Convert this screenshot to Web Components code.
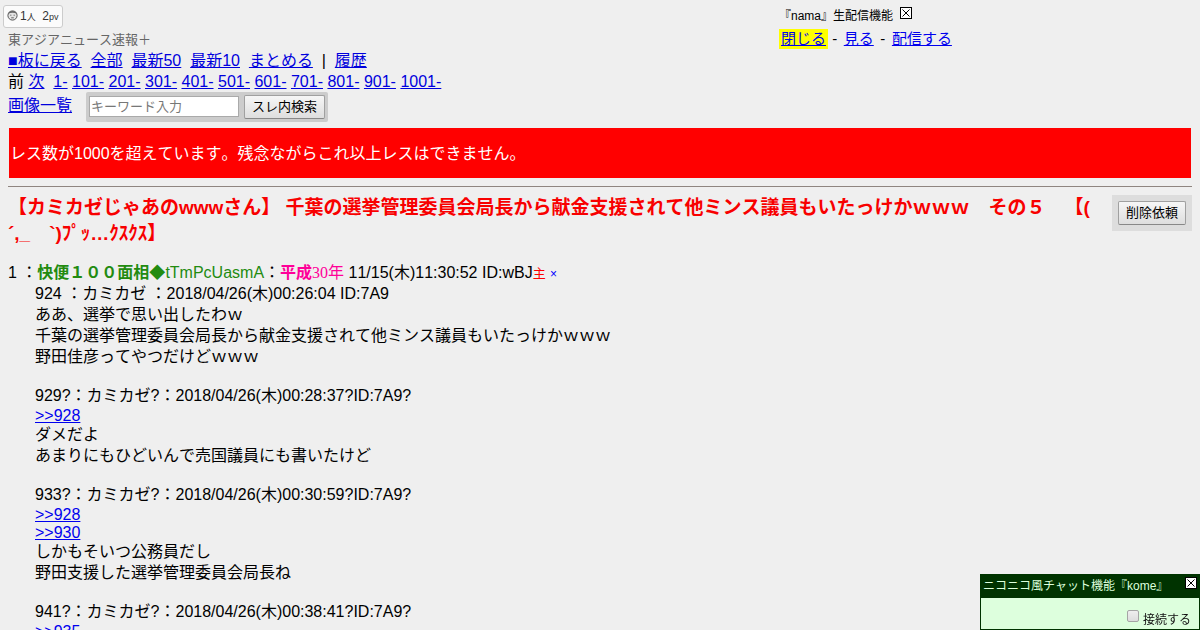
<!DOCTYPE html>
<html lang="ja">
<head>
<meta charset="utf-8">
<title>東アジアニュース速報＋</title>
<style>
    html, body{margin: 0; height: 630px; overflow: hidden}
    body{
        background: #efefef;
        color: #000;
        font: 16px/21px "Liberation Sans", "Noto Sans CJK JP", sans-serif;
        font-kerning: none;
        text-spacing-trim: space-all;
    }
</style>
</head>
<body>
<thread-page>
    <view-counter slot="top" people="1" views="2"></view-counter>
    <board-nav slot="top" board="東アジアニュース速報＋"></board-nav>
    <nama-panel slot="side"></nama-panel>
    <limit-alert>レス数が1000を超えています。残念ながらこれ以上レスはできません。</limit-alert>
    <thread-title>【カミカゼじゃあのwwwさん】 千葉の選挙管理委員会局長から献金支援されて他ミンス議員もいたっけかｗｗｗ　その５　【(<br>´,_　`)ﾌﾟｯ…ｸｽｸｽ】</thread-title>
    <thread-post></thread-post>
</thread-page>
<kome-chat></kome-chat>

<script>
function attach(el, html){
    const template= document.createElement('template');
    template.innerHTML= html;
    el.attachShadow({mode: 'open'});
    el.shadowRoot.appendChild(template.content.cloneNode(true));
}

const closeBox= `<svg class="close" viewBox="0 0 12 12" width="12" height="12" shape-rendering="crispEdges">
    <rect x=".5" y=".5" width="11" height="11" fill="#fff" stroke="#000"/>
    <path d="M2.5 2.5L9.5 9.5M9.5 2.5L2.5 9.5" stroke="#000" fill="none" shape-rendering="auto"/>
</svg>`;

const buttonStyle= `
    button{
        box-sizing: border-box;
        height: 24px;
        padding: 0;
        border: 1px solid #a0a0a0;
        border-bottom-color: #888;
        border-radius: 2px;
        background: linear-gradient(#f6f6f6, #dedede);
        color: #000;
        font: 13px/20px "Liberation Sans", "Noto Sans CJK JP", sans-serif;
        font-kerning: none;
        white-space: nowrap;
    }
`;

class ThreadPage extends HTMLElement{
    constructor(){
        super();
        attach(this, `
            <style>
                :host{display: block; padding: 0 8px}
                .head{display: grid; grid-template-columns: 771px 1fr; height: 128px}
            </style>
            <div class="head">
                <div><slot name="top"></slot></div>
                <slot name="side"></slot>
            </div>
            <slot></slot>
        `);
    }
}

class ViewCounter extends HTMLElement{
    constructor(){
        super();
        attach(this, `
            <style>
                :host{
                    display: flex;
                    align-items: center;
                    box-sizing: border-box;
                    width: 60px;
                    height: 23px;
                    margin: 5px 0 0 -5px;
                    padding-left: 3px;
                    border: 1px solid #ccc;
                    border-radius: 3px;
                    background: #fbfbfb;
                    color: #333;
                    font-size: 12px;
                    line-height: 21px;
                    white-space: pre;
                }
                svg{margin: -3px 2px 0 0}
                small{font-size: 9px}
            </style>
            <svg width="11" height="11" viewBox="0 0 11 11">
                <circle cx="5.5" cy="5.5" r="4.6" fill="#e4e4e4" stroke="#555"/>
                <path d="M1 4.2Q1.6 1 5.5 1T10 4.2Q8 2.8 5.5 2.8T1 4.2Z" fill="#666"/>
                <path d="M3.2 5.2h1.2M6.6 5.2h1.2M4.2 7.8h2.6" stroke="#666"/>
            </svg><span>${this.getAttribute('people')}<small>人</small>  ${this.getAttribute('views')}<small>pv</small></span>
        `);
    }
}

class BoardNav extends HTMLElement{
    constructor(){
        super();
        const pages= ['1-'];
        for(let i= 101; i <= 1001; i+= 100){
            pages.push(i + '-');
        }
        attach(this, `
            <style>
                :host{display: block; padding-top: 1px; white-space: nowrap}
                a{color: #00d}
                .board{color: #666; font-size: 13px; line-height: 21px}
                .search{display: flex; align-items: flex-start; height: 30px; line-height: 27px}
                form{
                    display: flex;
                    align-items: flex-start;
                    gap: 5px;
                    box-sizing: border-box;
                    width: 242px;
                    height: 30px;
                    margin: 0 0 0 14px;
                    padding: 3px 0 0 3px;
                    border-radius: 2px;
                    background: #ccc;
                }
                input{
                    box-sizing: border-box;
                    width: 150px;
                    height: 21px;
                    margin: 1px 0 0;
                    padding: 0 1px;
                    border: 1px solid #aaa;
                    background: #fff;
                    font: 13px "Liberation Sans", "Noto Sans CJK JP", sans-serif;
                    font-kerning: none;
                }
                input::placeholder{color: #777}
                ${buttonStyle}
                button{width: 81px}
            </style>
            <div class="board">${this.getAttribute('board')}</div>
            <div><a href="#">■板に戻る</a>&nbsp; <a href="#">全部</a>&nbsp; <a href="#">最新50</a>&nbsp; <a href="#">最新10</a>&nbsp; <a href="#">まとめる</a>&nbsp; |&nbsp; <a href="#">履歴</a></div>
            <div>前 <a href="#">次</a>&nbsp; ${pages.map(p => `<a href="#">${p}</a>`).join(' ')}</div>
            <div class="search">
                <a href="#">画像一覧</a>
                <form><input placeholder="キーワード入力"><button type="button">スレ内検索</button></form>
            </div>
        `);
    }
}

class NamaPanel extends HTMLElement{
    constructor(){
        super();
        attach(this, `
            <style>
                :host{display: block; padding-top: 5px; white-space: nowrap}
                .name{display: flex; gap: 7px; height: 21px; font-size: 12px; line-height: 22px}
                .close{margin-top: 2px}
                .links{margin-top: 3px; font-size: 15px; line-height: 20px}
                span a{color: #00e}
                .link{padding: 0 2.4px}
                .on{display: inline-block; padding: 0 2px; background: #ff0}
            </style>
            <div class="name"><span>『nama』生配信機能</span>${closeBox}</div>
            <div class="links"><span class="on"><a href="#">閉じる</a></span> - <span class="link"><a href="#">見る</a></span> - <span class="link"><a href="#">配信する</a></span></div>
        `);
    }
}

class LimitAlert extends HTMLElement{
    constructor(){
        super();
        attach(this, `
            <style>
                :host{
                    display: block;
                    height: 50px;
                    margin: 0 1px;
                    padding-left: 1px;
                    background: #f00;
                    color: #fff;
                    line-height: 51px;
                }
            </style>
            <slot></slot>
        `);
    }
}

class ThreadTitle extends HTMLElement{
    constructor(){
        super();
        attach(this, `
            <style>
                :host{
                    display: flex;
                    justify-content: space-between;
                    margin-top: 8px;
                    padding-top: 8px;
                    border-top: 1px solid #8f8580;
                }
                h1{
                    margin: 0;
                    color: #f80000;
                    font-size: 19px;
                    line-height: 26px;
                    white-space: nowrap;
                }
                .delete{
                    box-sizing: border-box;
                    width: 80px;
                    height: 36px;
                    padding: 6px;
                    background: #ddd;
                    line-height: 0;
                }
                ${buttonStyle}
                button{width: 68px}
            </style>
            <h1><slot></slot></h1>
            <div class="delete"><button>削除依頼</button></div>
        `);
    }
}

// '' is an empty line, '>>' starts an anchor to another post
const lines= [
    '924 ：カミカゼ ：2018/04/26(木)00:26:04 ID:7A9',
    'ああ、選挙で思い出したわｗ',
    '千葉の選挙管理委員会局長から献金支援されて他ミンス議員もいたっけかｗｗｗ',
    '野田佳彦ってやつだけどｗｗｗ',
    '',
    '929?：カミカゼ?：2018/04/26(木)00:28:37?ID:7A9?',
    '>>928',
    'ダメだよ',
    'あまりにもひどいんで売国議員にも書いたけど',
    '',
    '933?：カミカゼ?：2018/04/26(木)00:30:59?ID:7A9?',
    '>>928',
    '>>930',
    'しかもそいつ公務員だし',
    '野田支援した選挙管理委員会局長ね',
    '',
    '941?：カミカゼ?：2018/04/26(木)00:38:41?ID:7A9?',
    '>>935'
];

class ThreadPost extends HTMLElement{
    constructor(){
        super();
        const body= lines.map(line => {
            if(line === '') return '<div class="low"></div>';
            if(line.startsWith('>>')) return `<div class="low"><a href="#">${line.replace(/>/g, '&gt;')}</a></div>`;
            return `<div>${line}</div>`;
        }).join('');
        attach(this, `
            <style>
                :host{display: block; margin-top: 15px; white-space: nowrap}
                .head{height: 21px}
                .body{padding-left: 27px}
                .low{height: 18px; line-height: 20px}
                a{color: #00e}
                .name{color: #228b10}
                .era{color: #f09; font-family: "Liberation Serif", "Noto Sans CJK JP", serif}
                .owner{color: #f00; font-size: 13px}
                .x{color: #00f; font-size: 12px}
            </style>
            <div class="head">1 ：<span class="name"><b>快便１００面相◆</b>tTmPcUasmA</span>：<span class="era"><b>平成</b>30年</span> 11/15(木)11:30:52 ID:wBJ<span class="owner">主</span> <span class="x">×</span></div>
            <div class="body">${body}</div>
        `);
    }
}

class KomeChat extends HTMLElement{
    constructor(){
        super();
        attach(this, `
            <style>
                :host{
                    display: block;
                    position: fixed;
                    right: 0;
                    bottom: 0;
                    box-sizing: border-box;
                    width: 220px;
                    height: 56px;
                    border: 1px solid #030;
                    background: #dfd;
                    font-size: 12px;
                }
                .bar{
                    display: flex;
                    justify-content: space-between;
                    height: 23px;
                    padding: 0 2px;
                    background: #030;
                    color: #dfd;
                    line-height: 22px;
                }
                .close{margin-top: 2px}
                label{
                    display: flex;
                    justify-content: flex-end;
                    gap: 4px;
                    padding: 11px 8px 0 0;
                    color: #111;
                    line-height: 22px;
                }
                input{
                    appearance: none;
                    box-sizing: border-box;
                    width: 12px;
                    height: 12px;
                    margin: 1px 0 0;
                    border: 1px solid #a5a5a5;
                    border-radius: 2px;
                    background: linear-gradient(#eee, #ddd);
                }
            </style>
            <div class="bar"><span>ニコニコ風チャット機能『kome』</span>${closeBox}</div>
            <label><input type="checkbox">接続する</label>
        `);
    }
}

window.customElements.define('thread-page', ThreadPage);
window.customElements.define('view-counter', ViewCounter);
window.customElements.define('board-nav', BoardNav);
window.customElements.define('nama-panel', NamaPanel);
window.customElements.define('limit-alert', LimitAlert);
window.customElements.define('thread-title', ThreadTitle);
window.customElements.define('thread-post', ThreadPost);
window.customElements.define('kome-chat', KomeChat);
</script>
</body>
</html>
